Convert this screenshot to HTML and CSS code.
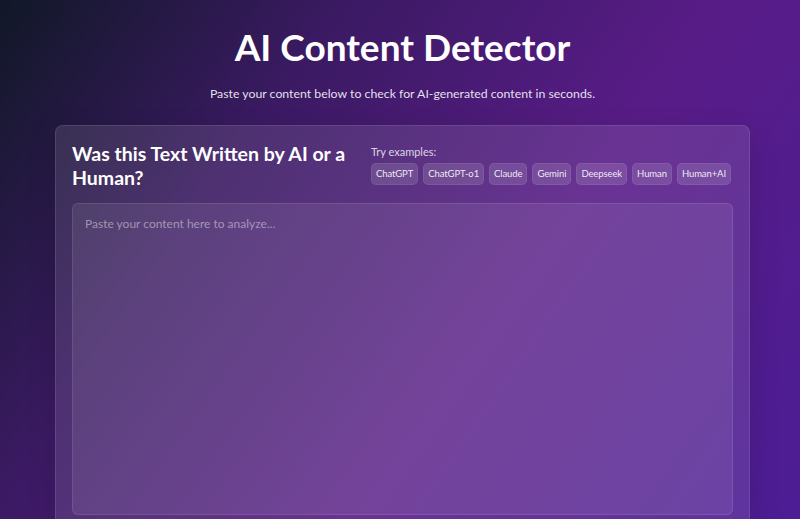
FILE: index.html
```html
<!DOCTYPE html>
<html lang="en">

<head>
  <meta charset="UTF-8">
  <meta name="viewport" content="width=device-width, initial-scale=1.0">
  <title>AI Content Detector</title>
  <link rel="stylesheet" href="styles.css">
</head>

<body>
  <div class="pagina">
    <!-- Cabeçalho -->
    <header class="topo">
      <h1>AI Content Detector</h1>
      <p>Paste your content below to check for AI-generated content in seconds.</p>
    </header>

    <!-- Cartão principal -->
    <div class="cartao">
      <div class="cartao-topo">
        <h2>Was this Text Written by AI or a Human?</h2>
        <div class="exemplos">
          <span class="exemplos-titulo">Try examples:</span>
          <div class="chips">
            <button class="chip">ChatGPT</button>
            <button class="chip">ChatGPT-o1</button>
            <button class="chip">Claude</button>
            <button class="chip">Gemini</button>
            <button class="chip">Deepseek</button>
            <button class="chip">Human</button>
            <button class="chip">Human+AI</button>
          </div>
        </div>
      </div>

      <textarea class="texto" placeholder="Paste your content here to analyze..."></textarea>
    </div>
  </div>
</body>

</html>
```

FILE: styles.css
```css
/* Estilo geral da página */
body {
  margin: 0;
  padding-left: 5px;
  min-height: 100vh;
  font-family: Lato, "Noto Sans", sans-serif;
  color: white;
  background: linear-gradient(125deg, #111827 0%, #3b1a63 30%, #581c87 62%, #4c1d95 100%);
  background-attachment: fixed;
  overflow: hidden;
}

.pagina {
  max-width: 695px;
  margin: 0 auto;
  padding-top: 24px;
}

.topo {
  text-align: center;
}

.topo h1 {
  margin: 0;
  font-size: 37px;
  font-weight: 700;
  line-height: 46px;
}

.topo p {
  margin: 14px 0 0;
  font-size: 12.3px;
  line-height: 20px;
  color: rgba(255, 255, 255, 0.88);
}

/* Cartão com fundo translúcido */
.cartao {
  margin-top: 21px;
  padding: 16px 16px 16px;
  border-radius: 8px;
  background: rgba(255, 255, 255, 0.1);
  border: 1px solid rgba(255, 255, 255, 0.1);
  box-shadow: 0 10px 30px rgba(0, 0, 0, 0.15);
}

.cartao-topo {
  display: flex;
  justify-content: space-between;
  gap: 16px;
}

.cartao-topo h2 {
  flex: 1;
  margin: 0;
  font-size: 19.5px;
  font-weight: 700;
  line-height: 24px;
}

.exemplos {
  flex-shrink: 0;
  display: flex;
  flex-direction: column;
  gap: 4px;
  padding-top: 3px;
  padding-right: 2px;
}

.exemplos-titulo {
  font-size: 11px;
  line-height: 14px;
  color: rgba(255, 255, 255, 0.8);
}

.chips {
  display: flex;
  gap: 5px;
}

.chip {
  white-space: nowrap;
  font-family: inherit;
  font-size: 9.5px;
  letter-spacing: -0.1px;
  line-height: 14px;
  padding: 3px 4px;
  color: rgba(255, 255, 255, 0.9);
  background: rgba(255, 255, 255, 0.13);
  border: 1px solid rgba(255, 255, 255, 0.07);
  border-radius: 5px;
  cursor: pointer;
}

.chip:hover {
  background: rgba(255, 255, 255, 0.2);
}

/* Campo de texto */
.texto {
  display: block;
  box-sizing: border-box;
  width: 100%;
  height: 312px;
  margin-top: 13px;
  padding: 12px 12px;
  font-family: inherit;
  font-size: 12px;
  color: white;
  background: rgba(255, 255, 255, 0.08);
  border: 1px solid rgba(255, 255, 255, 0.1);
  border-radius: 6px;
  resize: none;
  outline: none;
}

.texto::placeholder {
  color: rgba(255, 255, 255, 0.45);
}
```
